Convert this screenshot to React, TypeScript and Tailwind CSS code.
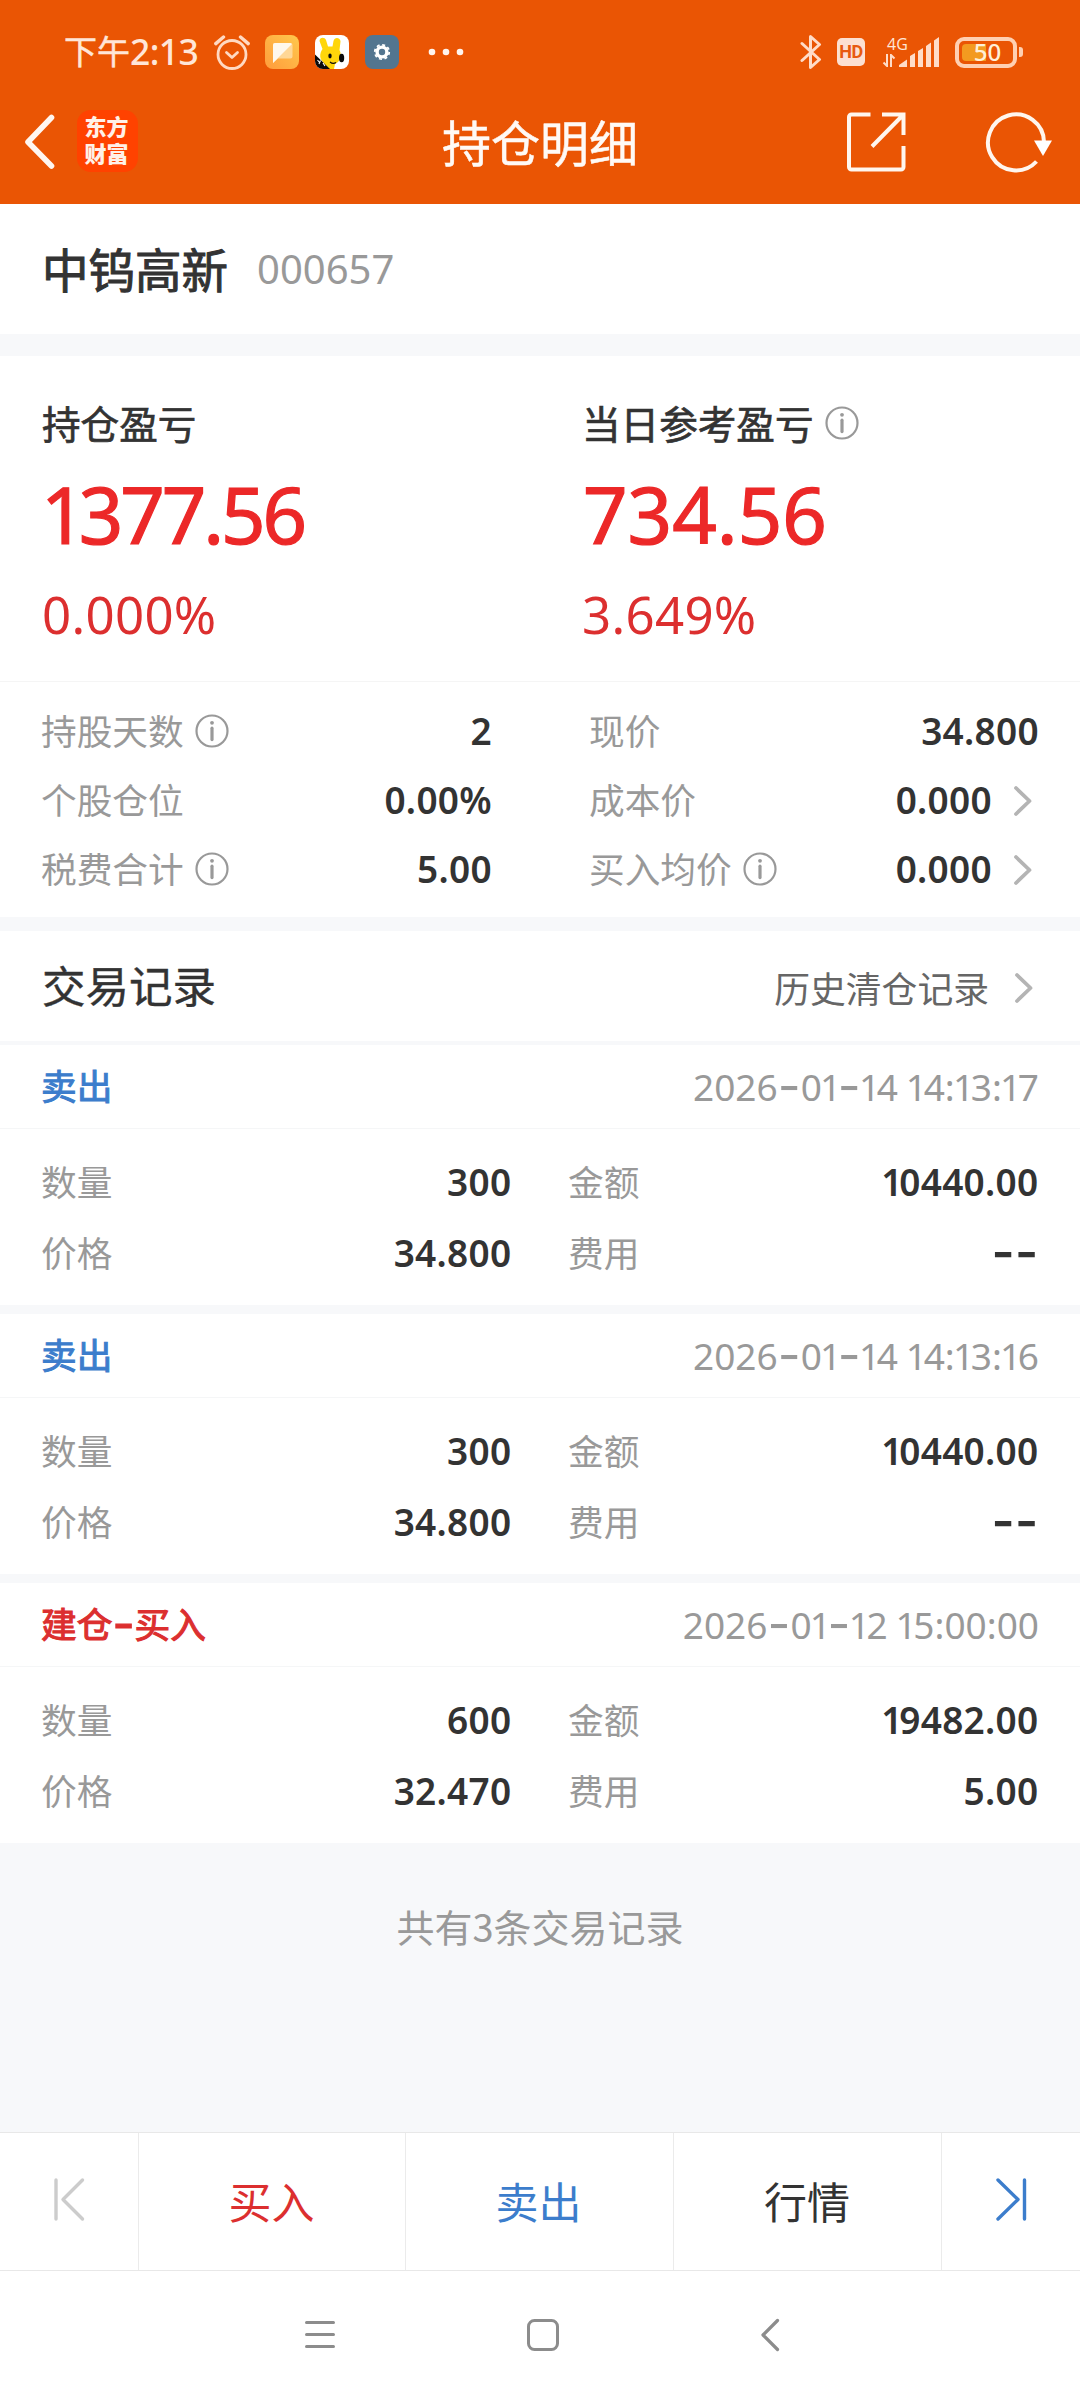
import React from "react";

const CJK = "font-['Noto_Sans_CJK_SC',sans-serif]";
const NUM = "font-['Noto_Sans','Noto_Sans_CJK_SC',sans-serif]";

/* Figures with a narrow "1" and wide, raised hyphens. */
function Figures({ text }: { text: string }) {
  return (
    <>
      {text.split(/([1-])/).map((part, i) => {
        if (part === "1") return <span key={i} className="-ml-[0.05em] tracking-[-0.09em]">1</span>;
        if (part === "-") return <span key={i} className="align-[-0.065em] font-['Inter',sans-serif] text-[1.350em] leading-[0]">-</span>;
        return part;
      })}
    </>
  );
}

function InfoIcon() {
  return (
    <svg width="34" height="34" viewBox="0 0 34 34" className="shrink-0">
      <circle cx="17" cy="17" r="15.5" fill="none" stroke="#999" strokeWidth="2.2" />
      <circle cx="17" cy="8.8" r="1.9" fill="#999" />
      <path d="M17 14.2V25.6" stroke="#999" strokeWidth="3.2" strokeLinecap="round" />
    </svg>
  );
}

function ChevronRight() {
  return (
    <svg width="20" height="32" viewBox="0 0 20 32" className="shrink-0">
      <path d="M3 3L16.5 16L3 29" fill="none" stroke="#b4b4b4" strokeWidth="3.8" strokeLinecap="round" strokeLinejoin="round" />
    </svg>
  );
}

function StatusBar() {
  return (
    <div className="flex h-[104px] items-center pl-[64px] pr-[57px] text-[#ffe6d8]">
      <div className="flex w-[150px] items-center text-[33px] leading-none">
        <span className={`${CJK} pb-[3px] [-webkit-text-stroke:0.5px_#ffe6d8]`}>下午</span>
        <span className="font-['Noto_Sans',sans-serif] text-[35.500px] font-medium tracking-[-0.600px]">2:13</span>
      </div>
      <svg width="36" height="36" viewBox="0 0 36 36" fill="none" stroke="#ffd9c2" strokeLinecap="round" strokeLinejoin="round">
        <circle cx="18" cy="20.5" r="14" strokeWidth="2.8" />
        <path d="M12.5 18.5L18 23.5L23.5 18.5" strokeWidth="2.8" />
        <path d="M1.8 9.6L9.5 3M26.5 3L34.2 9.6" strokeWidth="3.4" />
      </svg>
      <svg width="34" height="34" viewBox="0 0 34 34" className="ml-[15px]">
        <defs>
          <linearGradient id="noteBg" x1="1" y1="0" x2="0" y2="1">
            <stop offset="0" stopColor="#ffc84c" />
            <stop offset="1" stopColor="#ff9c3c" />
          </linearGradient>
        </defs>
        <rect width="34" height="34" rx="8" fill="url(#noteBg)" />
        <path d="M10 8H25.5A2 2 0 0 1 27.500 10V21.500A2 2 0 0 1 25.500 23.500H13L8 28V10A2 2 0 0 1 10 8Z" fill="#ffd796" />
        <path d="M10 8H25.5L27 9L8 28V10A2 2 0 0 1 10 8Z" fill="#fff8ec" />
      </svg>
      <svg width="34" height="34" viewBox="0 0 34 34" className="ml-[16px]">
        <defs>
          <clipPath id="bunnyClip"><rect width="34" height="34" rx="8" /></clipPath>
        </defs>
        <g clipPath="url(#bunnyClip)">
          <rect width="34" height="34" fill="#fff" />
          <path d="M4.500 6C4.500 2 9.500 1.500 11 5L13 11.500H17.500L18.500 6C19.500 1.500 25.500 2.500 25.500 6.500L24.500 15C27.500 21 25 27 20 29L19 34H11L8 27C3 22 6 16 7.500 14Z" fill="#ffd60a" />
          <path d="M0 19.500L15 34H0Z" fill="#0b0b0b" />
          <path d="M2.500 25L5 28M5.500 25.500L4 29M8 28L10 31" stroke="#fff" strokeWidth="1.100" />
          <ellipse cx="15" cy="21" rx="1.700" ry="2.400" fill="#0b0b0b" />
          <ellipse cx="26.600" cy="23" rx="2.600" ry="4.300" fill="#0b0b0b" />
          <path d="M15 27Q18 29.500 21 27.500" stroke="#0b0b0b" strokeWidth="1.100" fill="none" />
        </g>
      </svg>
      <svg width="34" height="34" viewBox="0 0 34 34" className="ml-[16px]">
        <rect width="34" height="34" rx="8" fill="#53758f" />
        <circle cx="17" cy="17" r="4.900" fill="none" stroke="#fff" strokeWidth="3.400" />
        <circle cx="17" cy="17" r="7.200" fill="none" stroke="#fff" strokeWidth="1.800" strokeDasharray="3 2.650" />
      </svg>
      <svg width="36" height="8" viewBox="0 0 36 8" className="ml-[29px]" fill="#fff5ef">
        <circle cx="4" cy="4" r="3.300" />
        <circle cx="18" cy="4" r="3.300" />
        <circle cx="32" cy="4" r="3.300" />
      </svg>

      <div className="ml-auto flex items-center">
        <svg width="22" height="36" viewBox="0 0 22 36" fill="none" stroke="#ffdcc8" strokeWidth="3" strokeLinejoin="round" strokeLinecap="round">
          <path d="M2 9.500L19.500 25.500L10.500 33.500V2.500L19.500 10.500L2 26.500" />
        </svg>
        <div className="ml-[15px] flex h-[28px] w-[28px] items-center justify-center rounded-[5px] bg-[#fce0d2] font-['Roboto',sans-serif] text-[18px] font-bold leading-none tracking-[-0.5px] text-[#e85a10]">
          HD
        </div>
        <div className="ml-[17px] flex h-[34px] items-end">
          <div className="flex w-[16px] flex-col">
            <span className="whitespace-nowrap pl-[5px] font-['Open_Sans',sans-serif] text-[16px] leading-[14px]">4G</span>
            <svg width="14" height="13" viewBox="0 0 14 13" className="mb-[2px] mt-[3px]" fill="none" stroke="#ffdcc8" strokeWidth="2">
              <path d="M5 0V12L1.500 8.500M9 13V1L12.500 4.500" />
            </svg>
          </div>
          <svg width="42" height="30" viewBox="0 0 42 30" className="mb-[2px]" fill="#ffdcc8">
            <path d="M1 30V28L9 22.500V30ZM12 30V19L17 16V30ZM20 30V14L25 11V30ZM28 30V9L33 5.500V30ZM36 30V3.500L41 0V30Z" />
          </svg>
        </div>
        <div className="ml-[15px] flex items-center">
          <div className="relative flex h-[31px] w-[62px] items-center justify-center rounded-[9px] border-[4px] border-[#ffd0b2]">
            <div className="absolute left-[3px] top-[3px] h-[17px] w-[24px] rounded-l-[4px] bg-[#f39a20]" />
            <span className="relative pl-[3px] font-['Noto_Sans',sans-serif] text-[24px] font-medium leading-none text-[#fff0d8]">50</span>
          </div>
          <div className="ml-[2px] h-[10px] w-[4px] rounded-r-[3px] bg-[#ffd0b2]" />
        </div>
      </div>
    </div>
  );
}

function TitleBar() {
  return (
    <div className="grid h-[100px] grid-cols-[1fr_auto_1fr] items-start">
      <div className="flex items-center pl-[22px] pt-[6px]">
        <svg width="36" height="56" viewBox="0 0 36 56">
          <path d="M29.500 4.500L6 29L29.500 53" fill="none" stroke="#fff6f0" strokeWidth="5.600" strokeLinecap="round" strokeLinejoin="round" />
        </svg>
        <div className="ml-[19px] flex h-[62px] w-[61px] items-center justify-center rounded-[14px] bg-[#ff4200] pb-[4px] pr-[2px]">
          <p className="w-[44px] break-all font-['Noto_Sans_CJK_SC',sans-serif] text-[22px] font-black leading-[27px] text-[#fff1e8]">东方财富</p>
        </div>
      </div>
      <h1 className={`${CJK} pt-[12px] text-[49px] leading-[50px] text-[#fffaf6] [-webkit-text-stroke:0.500px_#fffaf6]`}>持仓明细</h1>
      <div className="flex justify-end pr-[27px] pt-[7px]">
        <svg width="60" height="62" viewBox="0 0 60 62" fill="none" stroke="#fff6ee" strokeWidth="4" strokeLinejoin="round">
          <path d="M24.500 3.500H5.500A2.500 2.500 0 0 0 3 6V56A2.500 2.500 0 0 0 5.500 58.500H55A2.500 2.500 0 0 0 57.500 56V35" />
          <path d="M36 3.500H57.500V24M57 4L26 35.500" strokeLinejoin="miter" />
        </svg>
        <svg width="68" height="62" viewBox="0 0 68 62" className="ml-[79px]">
          <path d="M51.500 50.500A28 28 0 1 1 59 31" fill="none" stroke="#fff6ee" strokeWidth="4" />
          <path d="M49 29.500H67L58 45Z" fill="#fff" />
        </svg>
      </div>
    </div>
  );
}

function Summary({ label, info, value, percent }: { label: string; info?: boolean; value: string; percent: string }) {
  return (
    <div className="flex flex-1 flex-col pl-[42px]">
      <div className="flex h-[50px] items-center">
        <span className={`${CJK} pb-[4px] text-[38.600px] leading-none text-[#333] [-webkit-text-stroke:0.7px_#333]`}>{label}</span>
        {info && <div className="ml-[12px] pb-[3px]"><InfoIcon /></div>}
      </div>
      <div
        className={
          value.startsWith("1")
            ? "mt-[25px] h-[80px] pl-[3px] font-['Noto_Sans',sans-serif] text-[78px] leading-[80px] tracking-[-3.100px] text-[#ec2828] [-webkit-text-stroke:1.200px_#ec2828]"
            : "mt-[25px] h-[80px] pl-[1px] font-['Noto_Sans',sans-serif] text-[78px] leading-[80px] text-[#ec2828] [-webkit-text-stroke:1.200px_#ec2828]"
        }
      >
        <Figures text={value} />
      </div>
      <div className={`${NUM} mt-[30px] h-[60px] text-[51px] leading-[60px] tracking-[0.300px] text-[#dc2f2f]`}>{percent}</div>
    </div>
  );
}

function DetailRow({ label, info, value, link }: { label: string; info?: boolean; value: string; link?: boolean }) {
  return (
    <div className="flex h-[69px] items-center">
      <span className={`${CJK} pb-[4px] text-[35.700px] leading-none text-[#999]`}>{label}</span>
      {info && <div className="ml-[11px] pb-[1px]"><InfoIcon /></div>}
      <span className={`${NUM} -mr-[1px] ml-auto pb-[2px] text-[37px] font-semibold leading-none tracking-[0.300px] text-[#333]`}><Figures text={value} /></span>
      {link && <div className="ml-[22px] mr-[5px]"><ChevronRight /></div>}
    </div>
  );
}

function Field({ label, value }: { label: string; value: string }) {
  return (
    <div className="flex h-[71px] items-center justify-between">
      <span className={`${CJK} pb-[4px] text-[35.700px] leading-none text-[#999]`}>{label}</span>
      <span className={`${NUM} -mr-[1.500px] pb-[2px] text-[37px] font-semibold leading-none tracking-[0.300px] text-[#333]`}><Figures text={value} /></span>
    </div>
  );
}

type Trade = { side: string; buy?: boolean; time: string; qty: string; price: string; amount: string; fee: string };

const trades: Trade[] = [
  { side: "卖出", time: "2026-01-14 14:13:17", qty: "300", price: "34.800", amount: "10440.00", fee: "--" },
  { side: "卖出", time: "2026-01-14 14:13:16", qty: "300", price: "34.800", amount: "10440.00", fee: "--" },
  { side: "建仓-买入", buy: true, time: "2026-01-12 15:00:00", qty: "600", price: "32.470", amount: "19482.00", fee: "5.00" },
];

function TradeCard({ t }: { t: Trade }) {
  return (
    <div className="h-[260px] bg-white">
      <div className="flex h-[84px] items-center justify-between border-b border-[#f5f6f7] pl-[41px] pr-[41px]">
        <span
          className={
            t.buy
              ? "pb-[4px] font-['Noto_Sans_CJK_SC',sans-serif] text-[35.700px] leading-none text-[#dc2f2f] [-webkit-text-stroke:1.100px_#dc2f2f]"
              : "pb-[4px] font-['Noto_Sans_CJK_SC',sans-serif] text-[35.700px] leading-none text-[#3c7dcc] [-webkit-text-stroke:1px_#3c7dcc]"
          }
        >
          <Figures text={t.side} />
        </span>
        <span className={`${NUM} pb-[1px] text-[37px] leading-none text-[#999]`}><Figures text={t.time} /></span>
      </div>
      <div className="grid grid-cols-[469px_469px] gap-x-[58px] pl-[41px] pt-[18px]">
        <Field label="数量" value={t.qty} />
        <Field label="金额" value={t.amount} />
        <Field label="价格" value={t.price} />
        <Field label="费用" value={t.fee} />
      </div>
    </div>
  );
}

export default function App() {
  return (
    <div className="flex h-[2400px] w-[1080px] flex-col overflow-hidden bg-[#f7f8fa]">
      <header className="h-[204px] bg-[#ea5504]">
        <StatusBar />
        <TitleBar />
      </header>

      <section className="flex h-[130px] items-center bg-white pl-[42px]">
        <span className={`${CJK} pb-[2px] text-[46.500px] leading-none text-[#333] [-webkit-text-stroke:1px_#333]`}>中钨高新</span>
        <span className={`${NUM} ml-[29px] text-[40px] leading-none text-[#999]`}>000657</span>
      </section>

      <section className="mt-[22px] bg-white">
        <div className="flex h-[326px] border-b border-[#f5f5f5] pt-[43px]">
          <Summary label="持仓盈亏" value="1377.56" percent="0.000%" />
          <Summary label="当日参考盈亏" info value="734.56" percent="3.649%" />
        </div>
        <div className="grid h-[235px] grid-cols-[450px_449px] content-start gap-x-[98px] pl-[41px] pt-[15px]">
          <DetailRow label="持股天数" info value="2" />
          <DetailRow label="现价" value="34.800" />
          <DetailRow label="个股仓位" value="0.00%" />
          <DetailRow label="成本价" value="0.000" link />
          <DetailRow label="税费合计" info value="5.00" />
          <DetailRow label="买入均价" info value="0.000" link />
        </div>
      </section>

      <section className="mt-[14px] flex h-[110px] items-center justify-between bg-white pl-[42px] pr-[46px]">
        <span className={`${CJK} pb-[3px] text-[43.500px] leading-none text-[#333] [-webkit-text-stroke:0.400px_#333]`}>交易记录</span>
        <div className="flex items-center pt-[5px]">
          <span className={`${CJK} pb-[2px] text-[35.800px] leading-none text-[#666]`}>历史清仓记录</span>
          <div className="ml-[25px] pb-[1px]"><ChevronRight /></div>
        </div>
      </section>

      <section className="mt-[4px] flex flex-col gap-[9px]">
        {trades.map((t) => (
          <TradeCard key={t.time} t={t} />
        ))}
      </section>

      <div className={`${CJK} flex flex-1 items-start justify-center pt-[63px] text-[38px] leading-[40px] text-[#999]`}>
        共有3条交易记录
      </div>

      <nav className="grid h-[139px] grid-cols-[139px_267px_268px_268px_1fr] border-y border-[#e8e8e8] bg-white text-[43px] leading-none">
        <div className="flex items-start border-r border-[#ebebeb] pl-[52px] pt-[43px]">
          <svg width="34" height="48" viewBox="0 0 34 48" fill="none" stroke="#ccc" strokeWidth="3.400" strokeLinecap="round" strokeLinejoin="round">
            <path d="M4 4V43M30.500 4L11 23.500L30.500 43" />
          </svg>
        </div>
        <div className={`${CJK} flex items-center justify-center border-r border-[#ebebeb] pb-[2px] pr-[1px] text-[#dc2f2f]`}>买入</div>
        <div className={`${CJK} flex items-center justify-center border-r border-[#ebebeb] pb-[2px] pr-[2px] text-[#3c7dcc]`}>卖出</div>
        <div className={`${CJK} flex items-center justify-center border-r border-[#ebebeb] pb-[2px] pr-[1px] text-[#333]`}>行情</div>
        <div className="flex items-start pl-[52px] pt-[43px]">
          <svg width="34" height="48" viewBox="0 0 34 48" fill="none" stroke="#3c7dcc" strokeWidth="3.400" strokeLinecap="round" strokeLinejoin="round">
            <path d="M4 4L24 23.500L4 43M30.500 4V43" />
          </svg>
        </div>
      </nav>

      <div className="flex h-[129px] items-start bg-white pl-[303px] pt-[46px]">
        <svg width="34" height="36" viewBox="0 0 34 36" stroke="#8c8c8c" strokeWidth="3" strokeLinecap="round">
          <path d="M3.500 5.500H30.500M3.500 17.500H30.500M3.500 29.500H30.500" />
        </svg>
        <svg width="36" height="36" viewBox="0 0 36 36" className="ml-[188px]" fill="none" stroke="#8c8c8c" strokeWidth="3">
          <rect x="3.500" y="3.500" width="29" height="29" rx="6" />
        </svg>
        <svg width="22" height="36" viewBox="0 0 22 36" className="ml-[198px]" fill="none" stroke="#8c8c8c" strokeWidth="3.200" strokeLinecap="round" strokeLinejoin="round">
          <path d="M18.500 3.500L4 18L18.500 32.500" />
        </svg>
      </div>
    </div>
  );
}
